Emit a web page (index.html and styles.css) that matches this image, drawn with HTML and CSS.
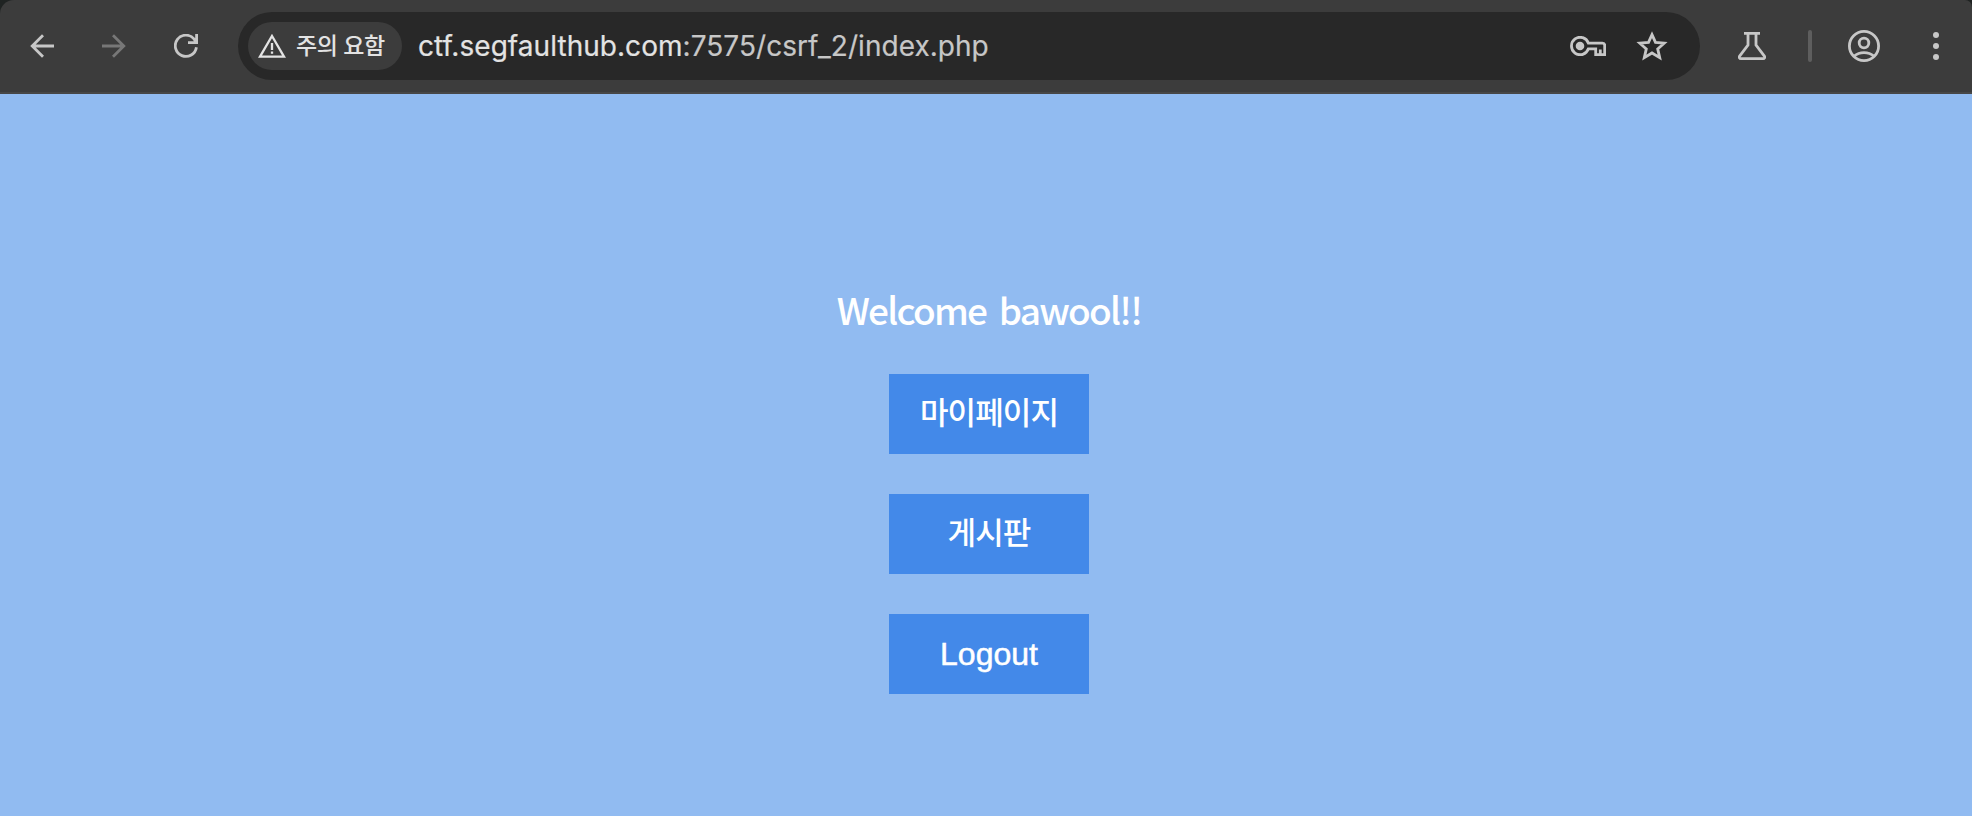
FILE: index.html
```html
<!DOCTYPE html>
<html lang="ko">
<head>
  <meta charset="UTF-8" />
  <meta name="viewport" content="width=device-width, initial-scale=1.0"/>
  <title>csrf_2</title>
  <link rel="stylesheet" href="styles.css">
</head>
<body>

  <div class="frame">
    <header class="toolbar">
      <nav class="nav">
        <svg class="icon" width="24" height="24" viewBox="0 0 24 24"><path d="M24 12H2M13 1.2L2.2 12L13 22.8"/></svg>
        <svg class="icon disabled" width="24" height="24" viewBox="0 0 24 24"><path d="M0 12h22M11 1.2L21.8 12L11 22.8"/></svg>
        <svg class="icon" width="24" height="24" viewBox="0 0 24 24"><path d="M22.4 13.2A10.6 10.6 0 1 1 20.2 5.2L22 8M22.6 0v8.6H14"/></svg>
      </nav>

      <div class="omnibox">
        <div class="chip">
          <svg class="icon" width="28" height="24" viewBox="0 0 28 24"><path d="M14 2L26 22.7H2z"/><path d="M14 9v7M14 17.5v2.2"/></svg>
          <span class="chip-text">주의 요함</span>
        </div>
        <div class="url"><span class="host">ctf.segfaulthub.com</span>:7575/csrf_2/index.php</div>
        <svg class="icon key" width="36" height="20" viewBox="0 0 36 20"><path d="M18.4 7.2H32.5a2.2 2.2 0 0 1 2.2 2.2V18.7H25.7V12.8H18.4A8.7 8.7 0 1 1 18.4 7.2z"/><path d="M30.3 13.5v5"/><circle class="solid" cx="10" cy="10" r="4.3"/></svg>
        <svg class="icon star" width="32" height="30" viewBox="0 0 32 30"><path d="M16 3.6L19.5 11.4L28.2 12.2L21.7 17.9L23.7 26.6L16 22L8.3 26.6L10.3 17.9L3.8 12.2L12.5 11.4z"/></svg>
      </div>

      <div class="actions">
        <svg class="icon flask" width="28" height="28" viewBox="0 0 28 28"><path d="M6 1.4H22M10 1.4V13L1.6 24.2a1.5 1.5 0 0 0 1.2 2.4H25.2a1.5 1.5 0 0 0 1.2-2.4L18 13V1.4"/></svg>
        <span class="divider"></span>
        <svg class="icon profile" width="32" height="32" viewBox="0 0 32 32"><circle cx="16" cy="16" r="14.6"/><circle cx="16" cy="13" r="4.8"/><path d="M6.2 26C11.5 21.4 20.5 21.4 25.8 26"/></svg>
        <svg class="icon menu" width="6" height="28" viewBox="0 0 6 28"><circle class="solid" cx="3" cy="3" r="3"/><circle class="solid" cx="3" cy="14" r="3"/><circle class="solid" cx="3" cy="25" r="3"/></svg>
      </div>
    </header>
  </div>

  <main class="page">
    <h1 class="welcome">Welcome bawool!!</h1>
    <a class="btn" href="#"><span class="ko">마이페이지</span></a>
    <a class="btn" href="#"><span class="ko">게시판</span></a>
    <a class="btn" href="#">Logout</a>
  </main>

</body>
</html>
```
FILE: styles.css
```css
* {
  box-sizing: border-box;
}
body {
  margin: 0;
  height: 816px;
  overflow: hidden;
  background-color: #91bbf1;
  color: #fff;
  font-family: "Liberation Sans", "Noto Sans CJK KR", sans-serif;
}

/* browser bar */
.frame {
  background-color: #1f2322;
}
.toolbar {
  display: flex;
  align-items: center;
  height: 94px;
  background-color: #3c3c3c;
  border-bottom: 2px solid #474747;
  border-radius: 14px 7px 0 0;
}
.nav {
  display: flex;
  gap: 48px;
  padding-left: 30px;
  width: 238px;
}
.icon {
  display: block;
  flex: none;
  fill: none;
  stroke: #c7c7c7;
  stroke-width: 2.8;
}
.solid {
  fill: #c7c7c7;
  stroke: none;
}
.disabled {
  stroke: #777;
}
.omnibox {
  display: flex;
  align-items: center;
  width: 1462px;
  height: 68px;
  padding-left: 10px;
  border-radius: 34px;
  background-color: #282828;
}
.chip {
  display: flex;
  align-items: center;
  gap: 10px;
  width: 154px;
  height: 48px;
  padding-left: 10px;
  border-radius: 24px;
  background-color: #3c3c3c;
}
.chip .icon {
  stroke: #e3e3e3;
  stroke-width: 2.3;
}
.chip-text {
  padding-bottom: 4px;
  color: #e3e3e3;
  font-family: "Noto Sans CJK KR", sans-serif;
  font-size: 23px;
  font-weight: 500;
  line-height: 44px;
  letter-spacing: -0.5px;
  white-space: nowrap;
}
.url {
  flex: 1;
  padding-left: 16px;
  color: #c7c7c7;
  font-family: Inter, sans-serif;
  font-size: 28px;
  line-height: 34px;
  letter-spacing: 0.04px;
  white-space: nowrap;
  -webkit-text-stroke: 0.2px;
}
.host {
  color: #e3e3e3;
}
.key {
  margin-right: 30px;
}
.star {
  margin-right: 32px;
}
.actions {
  display: flex;
  align-items: center;
  padding-left: 38px;
}
.divider {
  width: 4px;
  height: 32px;
  margin: 0 36px 0 42px;
  border-radius: 2px;
  background-color: #5e5e5e;
}
.menu {
  margin-left: 53px;
}

/* page */
.page {
  display: flex;
  flex-direction: column;
  align-items: center;
  gap: 40px;
  padding: 190px 0 0 6px;
}
.welcome {
  margin: 0;
  height: 50px;
  font-family: "Noto Sans CJK KR", sans-serif;
  font-size: 37px;
  font-weight: 500;
  line-height: 50px;
  letter-spacing: -1.75px;
  word-spacing: 4px;
  white-space: nowrap;
}
.btn {
  width: 200px;
  height: 80px;
  background-color: #4389e9;
  color: #fff;
  font-size: 32px;
  line-height: 80px;
  text-align: center;
  text-decoration: none;
  -webkit-text-stroke: 0.5px;
}
.ko {
  display: block;
  font-family: "Noto Sans CJK KR", sans-serif;
  font-size: 31px;
  font-weight: 500;
  line-height: 74px;
  letter-spacing: -0.9px;
  -webkit-text-stroke: 0;
}
```
